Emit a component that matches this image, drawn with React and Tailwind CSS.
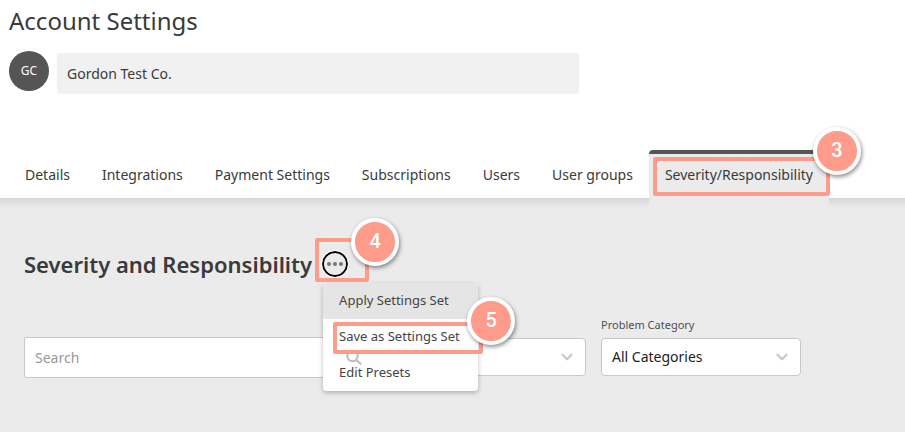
import { ChevronDown } from "lucide-react";

const tabs = [
  "Details",
  "Integrations",
  "Payment Settings",
  "Subscriptions",
  "Users",
  "User groups",
  "Severity/Responsibility",
];

function Step({ number, className }) {
  return (
    <span
      className={`absolute z-40 flex size-12 items-center justify-center rounded-full border-4 border-white bg-[#ff9b8b] pb-0.5 font-['Roboto'] text-xl font-medium text-white shadow-[1px_2px_4px_rgba(0,0,0,0.45)] ${className}`}
    >
      {number}
    </span>
  );
}

function Outline({ className }) {
  return (
    <span
      className={`pointer-events-none absolute z-30 rounded-xs border-4 border-[#ff9b8b] ${className}`}
    />
  );
}

function Filter({ id, label, hideLabel, options }) {
  return (
    <div className="mb-0.5 w-50">
      {!hideLabel && (
        <label htmlFor={id} className="mb-[5px] block text-[11px] leading-4 text-[#505050]">
          {label}
        </label>
      )}
      <div className="relative">
        <select
          id={id}
          aria-label={label}
          className="block h-[38px] w-full appearance-none rounded-sm border border-[#c8c8c8] bg-white px-2.5 text-sm text-[#222]"
        >
          {options.map((option) => (
            <option key={option}>{option}</option>
          ))}
        </select>
        <ChevronDown
          className="pointer-events-none absolute top-2.5 right-2.5 size-[18px] text-[#c8c8c8]"
          strokeWidth={3}
        />
      </div>
    </div>
  );
}

export default function App() {
  return (
    <div className="flex min-h-screen flex-col bg-white font-['Noto_Sans',sans-serif] text-[#3a3a3a]">
      <header className="px-[9px] pt-[5px]">
        <h1 className="text-2xl leading-8">Account Settings</h1>

        <div className="mt-3.5 flex gap-2">
          <span className="flex size-10 shrink-0 items-center justify-center rounded-full bg-[#555] text-xs text-white">
            GC
          </span>
          <input
            aria-label="Account name"
            defaultValue="Gordon Test Co."
            className="mt-0.5 h-[41px] w-full max-w-[522px] rounded-xs bg-[#f1f1f1] px-2.5 text-sm"
          />
        </div>

        {/* Tabs */}
        <nav className="mt-14 flex h-12 text-sm">
          {tabs.map((tab) =>
            tab === "Severity/Responsibility" ? (
              <a
                key={tab}
                href="#severity"
                aria-current="page"
                className="relative z-10 h-15 rounded-t-sm border-t-4 border-[#555] bg-[#ebebeb] px-4 leading-[42px] whitespace-nowrap"
              >
                {tab}
                <Outline className="top-[3px] -right-px left-1 h-[39px]" />
                <Step number={3} className="-top-[27px] -right-8" />
              </a>
            ) : (
              <a
                key={tab}
                href="#tab"
                className="border-t-4 border-transparent px-4 leading-[42px] whitespace-nowrap"
              >
                {tab}
              </a>
            )
          )}
        </nav>
      </header>

      <main className="flex-1 bg-[#ebebeb] px-6 pt-[50px] pb-13 shadow-[inset_0_12px_10px_-10px_rgba(0,0,0,0.14)]">
        <div className="flex items-center gap-2.5">
          <h2 className="text-[22px] leading-8 font-semibold">Severity and Responsibility</h2>

          {/* More actions */}
          <div className="relative">
            <button
              aria-label="More actions"
              className="flex size-[26px] items-center justify-center gap-0.5 rounded-full border-2 border-black outline-1 outline-white"
            >
              <span className="size-1 rounded-full bg-[#777]" />
              <span className="size-1 rounded-full bg-[#777]" />
              <span className="size-1 rounded-full bg-[#777]" />
            </button>
            <Outline className="-top-[13px] -left-[7px] h-11 w-[54px]" />
            <Step number={4} className="-top-[33px] left-[29px]" />

            <div className="absolute top-8 left-px z-20 w-[155px] rounded-sm bg-white text-[13px] text-[#444] shadow-[0_2px_5px_rgba(0,0,0,0.25)]">
              <button className="block h-9 w-full rounded-t-sm bg-[#e5e5e5] px-4 text-left whitespace-nowrap">
                Apply Settings Set
              </button>
              <button className="block h-9 w-full px-4 text-left whitespace-nowrap">
                Save as Settings Set
              </button>
              <button className="block h-9 w-full px-4 text-left whitespace-nowrap">
                Edit Presets
              </button>
            </div>
            <Outline className="top-[71px] left-[11px] h-8 w-[150px]" />
            <Step number={5} className="top-[46px] left-[145px]" />
          </div>
        </div>

        <div className="mt-[37px] flex items-end gap-[15px]">
          <div className="relative w-[347px]">
            <input
              type="search"
              aria-label="Search"
              placeholder="Search"
              className="block h-[41px] w-full rounded-xs border border-[#c8c8c8] bg-white px-2.5 text-sm placeholder:text-[#999]"
            />
            <svg
              viewBox="0 0 16 16"
              fill="none"
              stroke="#bdbdbd"
              strokeWidth="2"
              className="absolute top-3 right-[9px] z-20 size-4"
            >
              <circle cx="6.5" cy="7" r="5.2" />
              <path d="M10.3 11l5 4.3" />
            </svg>
          </div>
          <Filter id="severity" label="Severity" hideLabel options={[""]} />
          <Filter id="category" label="Problem Category" options={["All Categories"]} />
        </div>
      </main>
    </div>
  );
}
